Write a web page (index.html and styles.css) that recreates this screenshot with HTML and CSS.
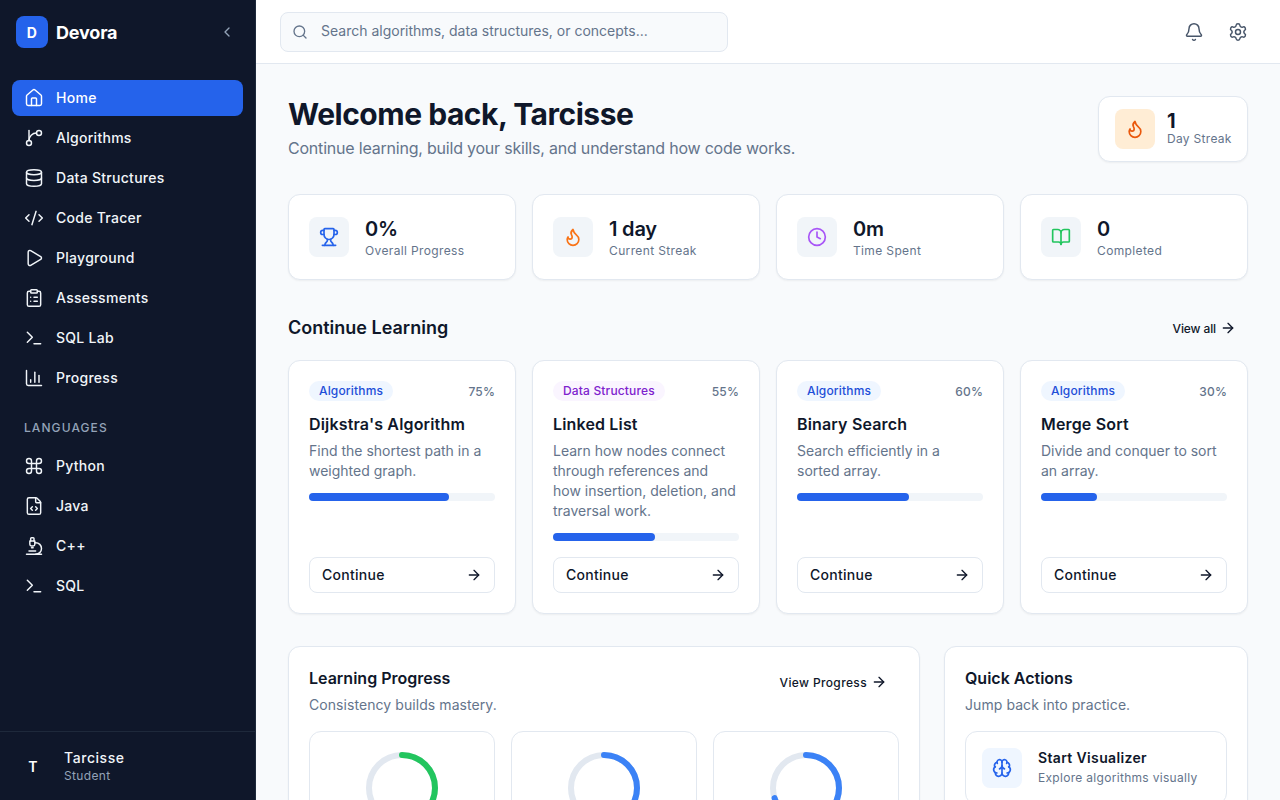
FILE: index.html
```html
<!DOCTYPE html>
<html lang="en">
<head>
    <meta charset="UTF-8">
    <meta name="viewport" content="width=device-width, initial-scale=1.0">
    <title>Devora</title>
    <link rel="stylesheet" href="styles.css">
</head>
<body>

    <aside class="sidebar">
        <div class="brand">
            <div class="brand-mark">D</div>
            <div class="brand-name">Devora</div>
            <svg class="brand-toggle" viewBox="0 0 24 24"><path d="m15 18-6-6 6-6"/></svg>
        </div>

        <nav class="nav">
            <a class="nav-item active"><svg viewBox="0 0 24 24"><path d="M15 21v-8a1 1 0 0 0-1-1h-4a1 1 0 0 0-1 1v8"/><path d="M3 10a2 2 0 0 1 .709-1.528l7-5.999a2 2 0 0 1 2.582 0l7 5.999A2 2 0 0 1 21 10v9a2 2 0 0 1-2 2H5a2 2 0 0 1-2-2z"/></svg>Home</a>
            <a class="nav-item"><svg viewBox="0 0 24 24"><line x1="6" x2="6" y1="3" y2="15"/><circle cx="18" cy="6" r="3"/><circle cx="6" cy="18" r="3"/><path d="M15 6a9 9 0 0 0-9 9"/></svg>Algorithms</a>
            <a class="nav-item"><svg viewBox="0 0 24 24"><ellipse cx="12" cy="5" rx="9" ry="3"/><path d="M3 5v14a9 3 0 0 0 18 0V5"/><path d="M3 12a9 3 0 0 0 18 0"/></svg>Data Structures</a>
            <a class="nav-item"><svg viewBox="0 0 24 24"><path d="m18 16 4-4-4-4"/><path d="m6 8-4 4 4 4"/><path d="m14.5 4-5 16"/></svg>Code Tracer</a>
            <a class="nav-item"><svg viewBox="0 0 24 24"><path d="M5 5a2 2 0 0 1 3.008-1.728l11.997 6.998a2 2 0 0 1 .003 3.458l-12 7A2 2 0 0 1 5 19z"/></svg>Playground</a>
            <a class="nav-item"><svg viewBox="0 0 24 24"><rect width="8" height="4" x="8" y="2" rx="1"/><path d="M16 4h2a2 2 0 0 1 2 2v14a2 2 0 0 1-2 2H6a2 2 0 0 1-2-2V6a2 2 0 0 1 2-2h2"/><path d="M12 11h4"/><path d="M12 16h4"/><path d="M8 11h.01"/><path d="M8 16h.01"/></svg>Assessments</a>
            <a class="nav-item"><svg viewBox="0 0 24 24"><path d="M12 19h8"/><path d="m4 17 6-6-6-6"/></svg>SQL Lab</a>
            <a class="nav-item"><svg viewBox="0 0 24 24"><path d="M3 3v16a2 2 0 0 0 2 2h16"/><path d="M18 17V9"/><path d="M13 17V5"/><path d="M8 17v-3"/></svg>Progress</a>
        </nav>

        <div class="nav-label">LANGUAGES</div>

        <nav class="nav">
            <a class="nav-item"><svg viewBox="0 0 24 24"><path d="M15 6v12a3 3 0 1 0 3-3H6a3 3 0 1 0 3 3V6a3 3 0 1 0-3 3h12a3 3 0 1 0-3-3"/></svg>Python</a>
            <a class="nav-item"><svg viewBox="0 0 24 24"><path d="M6 22a2 2 0 0 1-2-2V4a2 2 0 0 1 2-2h8a2.4 2.4 0 0 1 1.704.706l3.588 3.588A2.4 2.4 0 0 1 20 8v12a2 2 0 0 1-2 2z"/><path d="M14 2v5a1 1 0 0 0 1 1h5"/><path d="m10 13-2 2 2 2"/><path d="m14 17 2-2-2-2"/></svg>Java</a>
            <a class="nav-item"><svg viewBox="0 0 24 24"><path d="M6 18h8"/><path d="M3 22h18"/><path d="M14 22a7 7 0 1 0 0-14h-1"/><path d="M9 14h2"/><path d="M9 12a2 2 0 0 1-2-2V6h6v4a2 2 0 0 1-2 2Z"/><path d="M12 6V3a1 1 0 0 0-1-1H9a1 1 0 0 0-1 1v3"/></svg>C++</a>
            <a class="nav-item"><svg viewBox="0 0 24 24"><path d="M12 19h8"/><path d="m4 17 6-6-6-6"/></svg>SQL</a>
        </nav>

        <div class="user">
            <div class="user-avatar">T</div>
            <div>
                <div class="user-name">Tarcisse</div>
                <div class="user-role">Student</div>
            </div>
        </div>
    </aside>

    <div class="page">
        <header class="topbar">
            <div class="search">
                <svg viewBox="0 0 24 24"><path d="m21 21-4.34-4.34"/><circle cx="11" cy="11" r="8"/></svg>
                <span>Search algorithms, data structures, or concepts...</span>
            </div>
            <div class="topbar-icons">
                <svg viewBox="0 0 24 24"><path d="M10.268 21a2 2 0 0 0 3.464 0"/><path d="M3.262 15.326A1 1 0 0 0 4 17h16a1 1 0 0 0 .74-1.673C19.41 13.956 18 12.499 18 8A6 6 0 0 0 6 8c0 4.499-1.411 5.956-2.738 7.326"/></svg>
                <svg viewBox="0 0 24 24"><path d="M9.671 4.136a2.34 2.34 0 0 1 4.659 0 2.34 2.34 0 0 0 3.319 1.915 2.34 2.34 0 0 1 2.33 4.033 2.34 2.34 0 0 0 0 3.831 2.34 2.34 0 0 1-2.33 4.033 2.34 2.34 0 0 0-3.319 1.915 2.34 2.34 0 0 1-4.659 0 2.34 2.34 0 0 0-3.32-1.915 2.34 2.34 0 0 1-2.33-4.033 2.34 2.34 0 0 0 0-3.831A2.34 2.34 0 0 1 6.35 6.051a2.34 2.34 0 0 0 3.319-1.915"/><circle cx="12" cy="12" r="3"/></svg>
            </div>
        </header>

        <main class="content">
            <section class="welcome">
                <div class="welcome-text">
                    <h1>Welcome back, Tarcisse</h1>
                    <p>Continue learning, build your skills, and understand how code works.</p>
                </div>
                <div class="streak-card">
                    <div class="icon-box orange-box"><svg class="dark-orange" viewBox="0 0 24 24"><path d="M8.5 14.5A2.5 2.5 0 0 0 11 12c0-1.38-.5-2-1-3-1.072-2.143-.224-4.054 2-6 .5 2.5 2 4.9 4 6.5 2 1.6 3 3.5 3 5.5a7 7 0 1 1-14 0c0-1.153.433-2.294 1-3a2.5 2.5 0 0 0 2.5 2.5z"/></svg></div>
                    <div>
                        <div class="streak-value">1</div>
                        <div class="streak-label">Day Streak</div>
                    </div>
                </div>
            </section>

            <section class="stats">
                <div class="stat-card">
                    <div class="icon-box"><svg class="blue" viewBox="0 0 24 24"><path d="M10 14.66v1.626a2 2 0 0 1-.976 1.696A5 5 0 0 0 7 21.978"/><path d="M14 14.66v1.626a2 2 0 0 0 .976 1.696A5 5 0 0 1 17 21.978"/><path d="M18 9h1.5a1 1 0 0 0 0-5H18"/><path d="M4 22h16"/><path d="M6 9a6 6 0 0 0 12 0V3a1 1 0 0 0-1-1H7a1 1 0 0 0-1 1z"/><path d="M6 9H4.5a1 1 0 0 1 0-5H6"/></svg></div>
                    <div><div class="stat-value">0%</div><div class="stat-label">Overall Progress</div></div>
                </div>
                <div class="stat-card">
                    <div class="icon-box"><svg class="orange" viewBox="0 0 24 24"><path d="M8.5 14.5A2.5 2.5 0 0 0 11 12c0-1.38-.5-2-1-3-1.072-2.143-.224-4.054 2-6 .5 2.5 2 4.9 4 6.5 2 1.6 3 3.5 3 5.5a7 7 0 1 1-14 0c0-1.153.433-2.294 1-3a2.5 2.5 0 0 0 2.5 2.5z"/></svg></div>
                    <div><div class="stat-value">1 day</div><div class="stat-label">Current Streak</div></div>
                </div>
                <div class="stat-card">
                    <div class="icon-box"><svg class="purple" viewBox="0 0 24 24"><circle cx="12" cy="12" r="10"/><path d="M12 6v6l4 2"/></svg></div>
                    <div><div class="stat-value">0m</div><div class="stat-label">Time Spent</div></div>
                </div>
                <div class="stat-card">
                    <div class="icon-box"><svg class="green" viewBox="0 0 24 24"><path d="M12 7v14"/><path d="M3 18a1 1 0 0 1-1-1V4a1 1 0 0 1 1-1h5a4 4 0 0 1 4 4 4 4 0 0 1 4-4h5a1 1 0 0 1 1 1v13a1 1 0 0 1-1 1h-6a3 3 0 0 0-3 3 3 3 0 0 0-3-3z"/></svg></div>
                    <div><div class="stat-value">0</div><div class="stat-label">Completed</div></div>
                </div>
            </section>

            <section class="section-head">
                <h2>Continue Learning</h2>
                <a class="link">View all <svg viewBox="0 0 24 24"><path d="M5 12h14"/><path d="m12 5 7 7-7 7"/></svg></a>
            </section>

            <section class="courses">
                <div class="course-card">
                    <div class="course-top"><span class="tag">Algorithms</span><span class="percent">75%</span></div>
                    <h3>Dijkstra's Algorithm</h3>
                    <p>Find the shortest path in a weighted graph.</p>
                    <div class="bar"><div class="bar-fill" style="width: 75%"></div></div>
                    <a class="continue">Continue <svg viewBox="0 0 24 24"><path d="M5 12h14"/><path d="m12 5 7 7-7 7"/></svg></a>
                </div>
                <div class="course-card">
                    <div class="course-top"><span class="tag tag-purple">Data Structures</span><span class="percent">55%</span></div>
                    <h3>Linked List</h3>
                    <p>Learn how nodes connect through references and how insertion, deletion, and traversal work.</p>
                    <div class="bar"><div class="bar-fill" style="width: 55%"></div></div>
                    <a class="continue">Continue <svg viewBox="0 0 24 24"><path d="M5 12h14"/><path d="m12 5 7 7-7 7"/></svg></a>
                </div>
                <div class="course-card">
                    <div class="course-top"><span class="tag">Algorithms</span><span class="percent">60%</span></div>
                    <h3>Binary Search</h3>
                    <p>Search efficiently in a sorted array.</p>
                    <div class="bar"><div class="bar-fill" style="width: 60%"></div></div>
                    <a class="continue">Continue <svg viewBox="0 0 24 24"><path d="M5 12h14"/><path d="m12 5 7 7-7 7"/></svg></a>
                </div>
                <div class="course-card">
                    <div class="course-top"><span class="tag">Algorithms</span><span class="percent">30%</span></div>
                    <h3>Merge Sort</h3>
                    <p>Divide and conquer to sort an array.</p>
                    <div class="bar"><div class="bar-fill" style="width: 30%"></div></div>
                    <a class="continue">Continue <svg viewBox="0 0 24 24"><path d="M5 12h14"/><path d="m12 5 7 7-7 7"/></svg></a>
                </div>
            </section>

            <section class="bottom">
                <div class="panel">
                    <div class="panel-head">
                        <div>
                            <h2 class="panel-title">Learning Progress</h2>
                            <p class="panel-sub">Consistency builds mastery.</p>
                        </div>
                        <a class="link link-small">View Progress <svg viewBox="0 0 24 24"><path d="M5 12h14"/><path d="m12 5 7 7-7 7"/></svg></a>
                    </div>
                    <div class="rings">
                        <div class="ring-card">
                            <svg class="ring" viewBox="0 0 72 72"><circle class="ring-track" cx="36" cy="36" r="33"/><circle class="ring-value" cx="36" cy="36" r="33" stroke="#22c55e" stroke-dasharray="90 208"/></svg>
                        </div>
                        <div class="ring-card">
                            <svg class="ring" viewBox="0 0 72 72"><circle class="ring-track" cx="36" cy="36" r="33"/><circle class="ring-value" cx="36" cy="36" r="33" stroke="#3b82f6" stroke-dasharray="100 208"/></svg>
                        </div>
                        <div class="ring-card">
                            <svg class="ring" viewBox="0 0 72 72"><circle class="ring-track" cx="36" cy="36" r="33"/><circle class="ring-value" cx="36" cy="36" r="33" stroke="#3b82f6" stroke-dasharray="145 208"/></svg>
                        </div>
                    </div>
                </div>

                <div class="panel">
                    <h2 class="panel-title">Quick Actions</h2>
                    <p class="panel-sub">Jump back into practice.</p>
                    <div class="action">
                        <div class="icon-box blue-box"><svg class="blue" viewBox="0 0 24 24"><path d="M12 18V5"/><path d="M15 13a4.17 4.17 0 0 1-3-4 4.17 4.17 0 0 1-3 4"/><path d="M17.598 6.5A3 3 0 1 0 12 5a3 3 0 1 0-5.598 1.5"/><path d="M17.997 5.125a4 4 0 0 1 2.526 5.77"/><path d="M18 18a4 4 0 0 0 2-7.464"/><path d="M19.967 17.483A4 4 0 1 1 12 18a4 4 0 1 1-7.967-.517"/><path d="M6 18a4 4 0 0 1-2-7.464"/><path d="M6.003 5.125a4 4 0 0 0-2.526 5.77"/></svg></div>
                        <div class="action-text">
                            <div class="action-title">Start Visualizer</div>
                            <div class="action-sub">Explore algorithms visually</div>
                        </div>
                    </div>
                </div>
            </section>
        </main>
    </div>

</body>
</html>
```

FILE: styles.css
```css
* {
    box-sizing: border-box;
}

html, body {
    height: 100%;
}

body {
    margin: 0;
    display: flex;
    height: 100vh;
    overflow: hidden;
    font-family: 'Inter', 'Liberation Sans', sans-serif;
    letter-spacing: 0.01em;
    background-color: #f8fafc;
    color: #0f172a;
}

svg {
    fill: none;
    stroke: currentColor;
    stroke-width: 2;
    stroke-linecap: round;
    stroke-linejoin: round;
    flex-shrink: 0;
}

h1, h2, h3, p {
    margin: 0;
}

/* sidebar */
.sidebar {
    width: 256px;
    flex-shrink: 0;
    display: flex;
    flex-direction: column;
    background-color: #0f172a;
    border-right: 1px solid #1e293b;
    color: #f1f5f9;
}

.brand {
    height: 64px;
    display: flex;
    align-items: center;
    padding: 0 20px 0 16px;
    gap: 8px;
}

.brand-mark {
    width: 32px;
    height: 32px;
    border-radius: 8px;
    background-color: #2563eb;
    color: #fff;
    font-size: 14px;
    font-weight: 700;
    display: flex;
    align-items: center;
    justify-content: center;
}

.brand-name {
    flex: 1;
    font-size: 18px;
    font-weight: 700;
    color: #fff;
    letter-spacing: -0.01em;
}

.brand-toggle {
    width: 16px;
    height: 16px;
    color: #94a3b8;
}

.nav {
    display: flex;
    flex-direction: column;
    gap: 4px;
    padding: 0 12px;
}

.brand + .nav {
    margin-top: 16px;
}

.nav-item {
    height: 36px;
    display: flex;
    align-items: center;
    gap: 12px;
    padding: 0 12px 2px;
    border-radius: 8px;
    font-size: 14px;
    font-weight: 500;
    letter-spacing: 0.02em;
    color: #f1f5f9;
}

.nav-item svg {
    width: 20px;
    height: 20px;
    margin-top: 2px;
    stroke-width: 1.75;
}

.nav-item.active {
    background-color: #2563eb;
    color: #fff;
}

.nav-label {
    margin-top: 20px;
    padding: 0 24px;
    height: 24px;
    line-height: 24px;
    margin-bottom: 8px;
    font-size: 12px;
    font-weight: 500;
    letter-spacing: 0.09em;
    color: #94a3b8;
}

.user {
    margin-top: auto;
    height: 69px;
    display: flex;
    align-items: center;
    gap: 14px;
    padding: 0 16px;
    border-top: 1px solid #1e293b;
}

.user-avatar {
    width: 34px;
    height: 36px;
    display: flex;
    align-items: center;
    justify-content: center;
    font-size: 14px;
    font-weight: 600;
    color: #fff;
}

.user-name {
    margin-top: -1px;
    font-size: 14px;
    font-weight: 500;
    letter-spacing: 0.04em;
}

.user-role {
    margin-top: 2px;
    font-size: 12px;
    letter-spacing: 0.03em;
    color: #94a3b8;
}

/* top bar */
.page {
    flex: 1;
    min-width: 0;
    display: flex;
    flex-direction: column;
}

.topbar {
    height: 64px;
    flex-shrink: 0;
    display: flex;
    align-items: center;
    justify-content: space-between;
    padding: 0 32px 0 24px;
    background-color: #fff;
    border-bottom: 1px solid #e2e8f0;
}

.search {
    width: 448px;
    height: 40px;
    display: flex;
    align-items: center;
    gap: 13px;
    padding: 0 11px;
    background-color: #f8fafc;
    border: 1px solid #e2e8f0;
    border-radius: 8px;
    font-size: 14px;
    letter-spacing: 0;
    color: #64748b;
}

.search span {
    margin-bottom: 2px;
}

.search svg {
    width: 16px;
    height: 16px;
}

.topbar-icons {
    display: flex;
    gap: 24px;
    color: #475569;
}

.topbar-icons svg {
    width: 20px;
    height: 20px;
    stroke-width: 1.75;
}

/* main */
.content {
    padding: 32px;
    overflow: hidden;
}

.welcome {
    display: flex;
    justify-content: space-between;
    align-items: center;
    margin-bottom: 32px;
}

.welcome-text {
    padding-bottom: 2px;
}

h1 {
    font-size: 30px;
    line-height: 36px;
    font-weight: 700;
    letter-spacing: -0.016em;
    color: #0f172a;
}

.welcome p {
    margin-top: 4px;
    font-size: 16px;
    line-height: 24px;
    letter-spacing: -0.013em;
    color: #64748b;
}

.streak-card {
    display: flex;
    align-items: center;
    gap: 12px;
    width: 150px;
    height: 66px;
    padding: 0 16px;
    background-color: #fff;
    border: 1px solid #e2e8f0;
    border-radius: 12px;
    box-shadow: 0 1px 2px rgba(0, 0, 0, 0.05);
}

.icon-box {
    width: 40px;
    height: 40px;
    flex-shrink: 0;
    border-radius: 8px;
    background-color: #f1f5f9;
    display: flex;
    align-items: center;
    justify-content: center;
}

.icon-box svg {
    width: 20px;
    height: 20px;
}

.orange-box {
    background-color: #ffedd5;
}

.blue-box {
    background-color: #eff6ff;
}

.blue { color: #2563eb; }
.orange { color: #f97316; }
.dark-orange { color: #ea580c; }
.purple { color: #a855f7; }
.green { color: #22c55e; }

.streak-value {
    font-size: 20px;
    line-height: 20px;
    font-weight: 700;
}

.streak-label {
    margin-bottom: 1px;
    font-size: 12px;
    line-height: 15px;
    white-space: nowrap;
    letter-spacing: 0.025em;
    color: #64748b;
}

.stats {
    display: grid;
    grid-template-columns: repeat(4, 1fr);
    gap: 16px;
    margin-bottom: 32px;
}

.stat-card {
    height: 86px;
    display: flex;
    align-items: center;
    gap: 16px;
    padding: 0 20px;
    background-color: #fff;
    border: 1px solid #e2e8f0;
    border-radius: 12px;
    box-shadow: 0 1px 2px rgba(0, 0, 0, 0.05);
}

.stat-value {
    font-size: 20px;
    line-height: 28px;
    font-weight: 600;
    letter-spacing: -0.01em;
}

.stat-label {
    font-size: 12px;
    line-height: 16px;
    letter-spacing: 0.03em;
    color: #64748b;
}

.section-head {
    display: flex;
    justify-content: space-between;
    align-items: center;
    height: 32px;
    margin-bottom: 16px;
}

.section-head h2 {
    font-size: 18px;
    line-height: 28px;
    font-weight: 600;
    letter-spacing: 0;
}

.link {
    display: flex;
    align-items: center;
    gap: 4px;
    padding: 0 12px;
    font-size: 12px;
    font-weight: 500;
    letter-spacing: -0.01em;
    color: #0f172a;
}

.link svg {
    width: 16px;
    height: 16px;
}

.courses {
    display: grid;
    grid-template-columns: repeat(4, 1fr);
    gap: 16px;
    margin-bottom: 32px;
}

.course-card {
    height: 254px;
    display: flex;
    flex-direction: column;
    padding: 20px;
    background-color: #fff;
    border: 1px solid #e2e8f0;
    border-radius: 12px;
    box-shadow: 0 1px 2px rgba(0, 0, 0, 0.05);
}

.course-top {
    display: flex;
    justify-content: space-between;
    align-items: center;
    margin-bottom: 11px;
}

.tag {
    padding: 2px 10px;
    border-radius: 999px;
    background-color: #eff6ff;
    color: #1d4ed8;
    font-size: 12px;
    line-height: 16px;
    font-weight: 500;
}

.tag-purple {
    background-color: #faf5ff;
    color: #7e22ce;
}

.percent {
    font-size: 12px;
    font-weight: 500;
    color: #64748b;
}

h3 {
    font-size: 16px;
    line-height: 24px;
    font-weight: 600;
    color: #0f172a;
}

.course-card p {
    margin-top: 5px;
    font-size: 14px;
    line-height: 20px;
    letter-spacing: 0;
    color: #64748b;
}

.bar {
    height: 8px;
    margin-top: 12px;
    flex-shrink: 0;
    border-radius: 999px;
    background-color: #f1f5f9;
}

.bar-fill {
    height: 100%;
    border-radius: 999px;
    background-color: #2563eb;
}

.continue {
    margin-top: auto;
    height: 36px;
    flex-shrink: 0;
    display: flex;
    align-items: center;
    justify-content: space-between;
    padding: 0 12px 2px;
    border: 1px solid #e2e8f0;
    border-radius: 8px;
    font-size: 14px;
    font-weight: 500;
    letter-spacing: 0.02em;
    color: #0f172a;
}

.continue svg {
    width: 16px;
    height: 16px;
    margin-top: 2px;
}

.bottom {
    display: grid;
    grid-template-columns: 1fr 304px;
    gap: 24px;
}

.panel {
    padding: 20px;
    background-color: #fff;
    border: 1px solid #e2e8f0;
    border-radius: 12px;
    box-shadow: 0 1px 2px rgba(0, 0, 0, 0.05);
}

.panel-head {
    display: flex;
    justify-content: space-between;
    align-items: flex-start;
}

.panel-title {
    font-size: 16px;
    line-height: 22px;
    font-weight: 600;
    letter-spacing: 0;
}

.panel-sub {
    margin-top: 6px;
    font-size: 14px;
    line-height: 20px;
    letter-spacing: 0.005em;
    color: #64748b;
}

.link-small {
    height: 32px;
    padding-bottom: 2px;
    letter-spacing: 0.03em;
}

.rings {
    display: grid;
    grid-template-columns: repeat(3, 1fr);
    gap: 16px;
    margin-top: 16px;
}

.ring-card {
    height: 140px;
    padding-top: 20px;
    display: flex;
    justify-content: center;
    border: 1px solid #e2e8f0;
    border-radius: 12px;
}

.ring {
    width: 72px;
    height: 72px;
    transform: rotate(-90deg);
}

.ring-track {
    stroke: #e2e8f0;
    stroke-width: 6;
}

.ring-value {
    stroke-width: 6;
}

.action {
    display: flex;
    align-items: center;
    gap: 16px;
    height: 74px;
    margin-top: 16px;
    padding: 0 16px;
    border: 1px solid #e2e8f0;
    border-radius: 12px;
}

.action-text {
    padding-bottom: 2px;
}

.action-title {
    font-size: 14px;
    line-height: 20px;
    font-weight: 600;
    letter-spacing: 0.025em;
}

.action-sub {
    margin-top: 2px;
    font-size: 12px;
    line-height: 16px;
    letter-spacing: 0.025em;
    color: #64748b;
}
```
